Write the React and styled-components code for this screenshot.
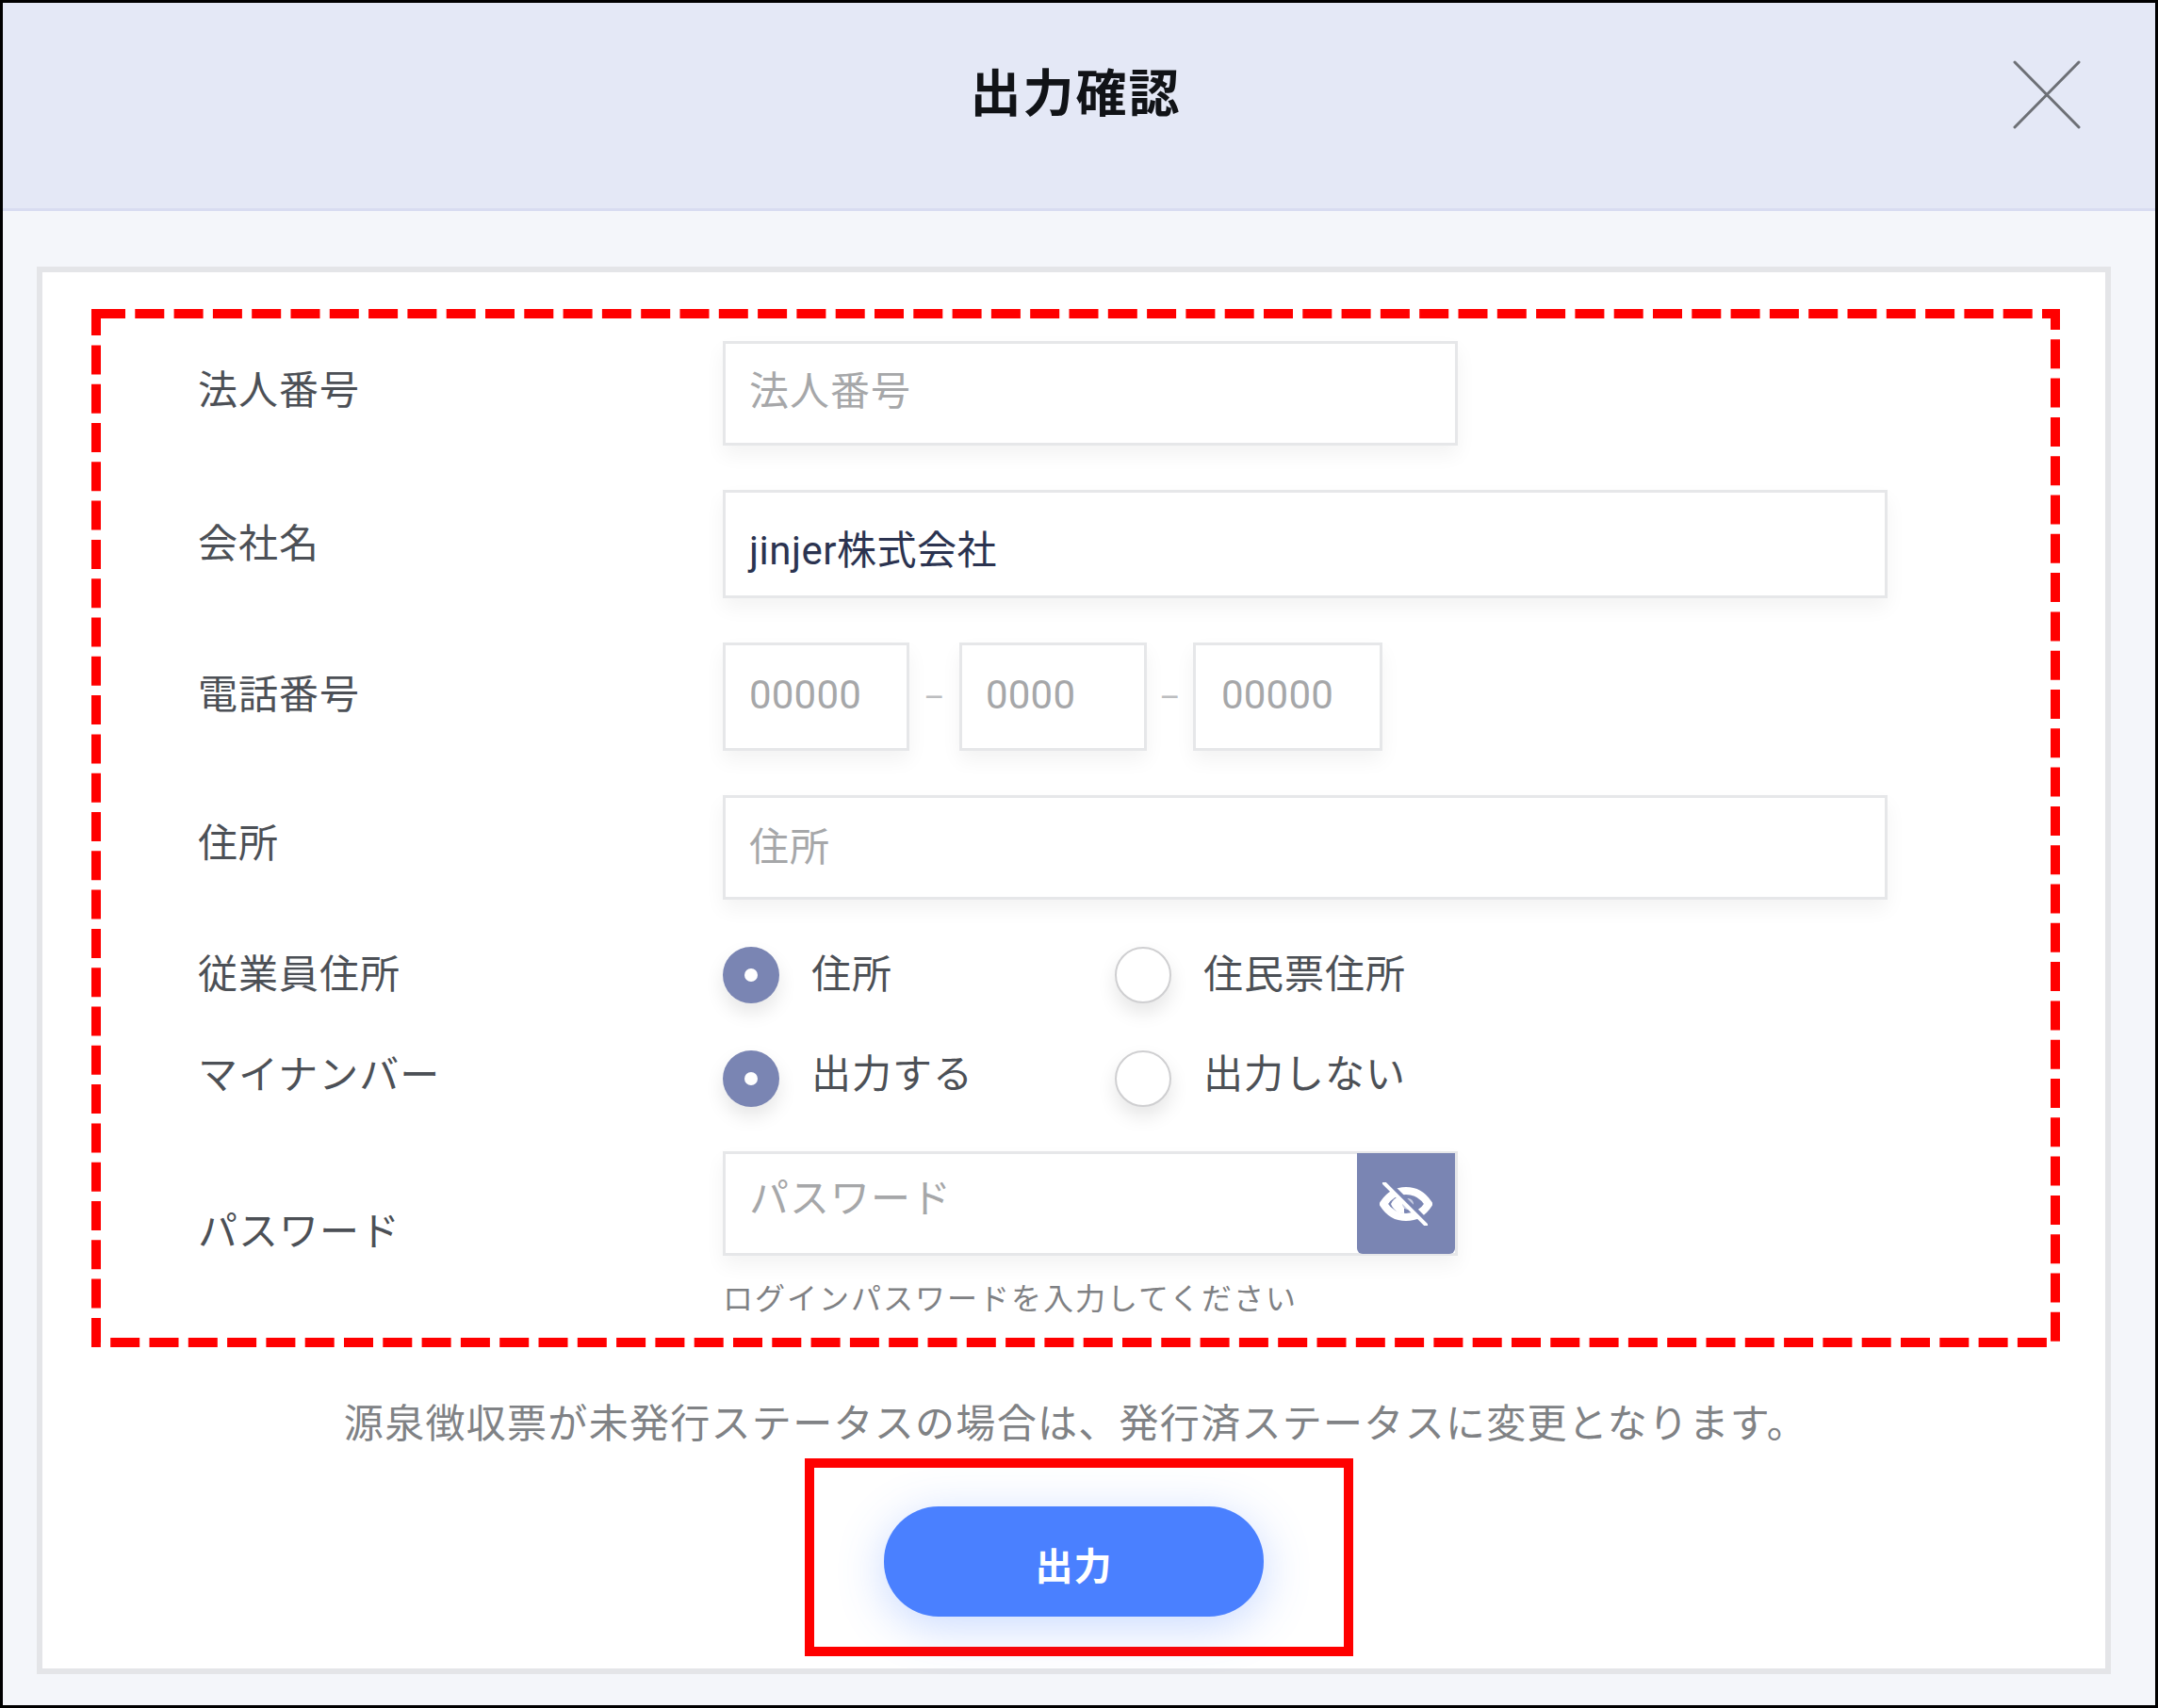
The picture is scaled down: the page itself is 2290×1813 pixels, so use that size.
import React from "react";
import styled, { createGlobalStyle } from "styled-components";

const Global = createGlobalStyle`
  html, body { margin: 0; padding: 0; background: #fff; }
  * { box-sizing: border-box; }
`;

const Frame = styled.div`
  width: 2290px;
  height: 1813px;
  border: 3px solid #000;
  display: flex;
  flex-direction: column;
  background: #f4f6fa;
  font-family: Roboto, "Noto Sans CJK JP", sans-serif;
  color: #4c5056;
`;

const Header = styled.header`
  height: 221px;
  flex: none;
  display: grid;
  grid-template-columns: 1fr auto 1fr;
  align-items: center;
  padding: 0 79px 24px 72px;
  background: #e4e8f6;
  border-bottom: 3px solid #d8dcf1;
`;

const Title = styled.h1`
  grid-column: 2;
  margin: 2px 0 0;
  font-size: 54px;
  line-height: 70px;
  font-weight: 700;
  letter-spacing: 2px;
  color: #111317;
`;

const Close = styled.button`
  grid-column: 3;
  justify-self: end;
  width: 72px;
  height: 73px;
  padding: 0;
  margin: 0;
  border: 0;
  background: none;
  display: block;
  svg { display: block; }
`;

const Body = styled.main`
  flex: 1;
  min-height: 0;
  padding: 59px 47px 33px 36px;
`;

const Card = styled.section`
  height: 100%;
  border: 6px solid #e4e5e8;
  background: #fff;
  padding: 39px 48px 0 52px;
  display: flex;
  flex-direction: column;
`;

const Annotated = styled.div`
  position: relative;
  height: 1102px;
  padding: 34px 0 0 113px;
  flex: none;
`;

const DashedMark = styled.svg`
  position: absolute;
  left: 0;
  top: 0;
  pointer-events: none;
`;

const Row = styled.div`
  display: grid;
  grid-template-columns: 557px 1fr;
  align-items: center;
  margin-top: ${(p) => p.$top || 0}px;
`;

const Label = styled.div`
  font-size: 42px;
  line-height: 60px;
  letter-spacing: 1px;
  position: relative;
  top: ${(p) => p.$shift || 0}px;
`;

const Field = styled.div`
  width: ${(p) => p.$w}px;
  height: ${(p) => p.$h}px;
  flex: none;
  display: flex;
  align-items: center;
  padding: ${(p) => p.$drop || 0}px 0 ${(p) => p.$lift ?? 0}px ${(p) => p.$pad ?? 25}px;
  background: #fff;
  border: 3px solid #e6e7e9;
  box-shadow: 0 10px 20px rgba(0, 0, 0, 0.05);
  font-size: 42px;
  letter-spacing: ${(p) => p.$ls ?? 1}px;
  color: ${(p) => (p.$filled ? "#2b3350" : "#a6a7a9")};
`;

const Group = styled.div`
  display: flex;
  align-items: center;
`;

const Sep = styled.span`
  width: ${(p) => p.$w}px;
  text-align: center;
  font-size: 34px;
  color: #bcbdbf;
`;

const RadioRow = styled.div`
  display: flex;
  height: 62px;
  align-items: center;
`;

const RadioItem = styled.label`
  width: 416px;
  display: flex;
  align-items: center;
  gap: 34px;
  font-size: 42px;
  letter-spacing: 1px;
`;

const RadioText = styled.span`
  position: relative;
  top: ${(p) => p.$shift || 0}px;
`;

const Dot = styled.span`
  width: 60px;
  height: 60px;
  flex: none;
  border-radius: 50%;
  display: flex;
  align-items: center;
  justify-content: center;
  background: ${(p) => (p.$on ? "#7a85b3" : "#fff")};
  border: ${(p) => (p.$on ? "0" : "2.5px solid #cfcfd1")};
  box-shadow: 0 10px 20px rgba(0, 0, 0, 0.1);
  &::after {
    content: "";
    display: ${(p) => (p.$on ? "block" : "none")};
    width: 14px;
    height: 14px;
    border-radius: 50%;
    background: #fff;
  }
`;

const PasswordBox = styled(Field)`
  position: relative;
`;

const Toggle = styled.button`
  position: absolute;
  right: 0;
  top: -1px;
  width: 104px;
  height: 107px;
  padding: 0;
  border: 0;
  border-radius: 0 0 6px 6px;
  background: #7a85b3;
  display: flex;
  align-items: center;
  justify-content: center;
  svg { filter: blur(0.7px); }
`;

const Hint = styled.div`
  margin-top: 34px;
  height: 25px;
  line-height: 25px;
  font-size: 32px;
  letter-spacing: 2px;
  color: #7f8184;
  white-space: nowrap;
`;

const Notice = styled.p`
  margin: 52px 0 0;
  height: 60px;
  line-height: 60px;
  text-align: center;
  font-size: 42px;
  letter-spacing: 1.3px;
  color: #808285;
  white-space: nowrap;
`;

const ActionMark = styled.div`
  align-self: center;
  margin: 6px 0 0 7px;
  width: 582px;
  height: 210px;
  border: 10px solid #ff0000;
  padding: 41px 85px 32px 74px;
`;

const Submit = styled.button`
  width: 100%;
  height: 117px;
  border: 0;
  border-radius: 58px;
  background: #4a80ff;
  color: #fff;
  font-family: inherit;
  font-size: 40px;
  font-weight: 700;
  letter-spacing: 1px;
  padding: 5px 0 0;
  box-shadow: 0 10px 50px rgba(74, 128, 255, 0.3);
`;

const CloseIcon = () => (
  <svg width="72" height="73" viewBox="0 0 72 73" fill="none">
    <path d="M2 2 L70 71 M70 2 L2 71" stroke="#6d7076" strokeWidth="3" strokeLinecap="round" />
  </svg>
);

const EyeOff = () => (
  <svg width="56" height="46" viewBox="0 0 56 46" fill="none">
    <path d="M4 23 C11 12 19 9 28 9 C37 9 45 12 52 23 C45 34 37 37 28 37 C19 37 11 34 4 23Z" stroke="#fff" strokeWidth="8" />
    <path d="M12 23 C16 15 22 14 26 14 L26 33 C20 33 15 30 12 23Z" fill="#fff" />
    <circle cx="30" cy="23" r="6" fill="#c9cee3" />
    <path d="M8 0 L51 43" stroke="#7a85b3" strokeWidth="6" />
    <path d="M5 1 L49 45" stroke="#fff" strokeWidth="4" strokeLinecap="round" />
  </svg>
);

const Radio = ({ on, text, shift }) => (
  <RadioItem>
    <Dot $on={on} />
    <RadioText $shift={shift}>{text}</RadioText>
  </RadioItem>
);

export default function App() {
  return (
    <>
      <Global />
      <Frame>
        <Header>
          <Title>出力確認</Title>
          <Close aria-label="閉じる">
            <CloseIcon />
          </Close>
        </Header>
        <Body>
          <Card>
            <Annotated>
              <DashedMark width="2089" height="1102" viewBox="0 0 2089 1102" fill="none">
                <rect x="5" y="5" width="2079" height="1092" stroke="#ff0000" strokeWidth="10" strokeDasharray="31 10.3" />
              </DashedMark>
              <Row>
                <Label $shift={-3}>法人番号</Label>
                <Field $w={780} $h={111} $lift={12}>法人番号</Field>
              </Row>
              <Row $top={47}>
                <Label>会社名</Label>
                <Field $w={1236} $h={115} $filled $drop={6} $ls={0.5}>jinjer株式会社</Field>
              </Row>
              <Row $top={47}>
                <Label $shift={-2}>電話番号</Label>
                <Group>
                  <Field $w={198} $h={115} $lift={4} $ls={0.2}>00000</Field>
                  <Sep $w={53}>–</Sep>
                  <Field $w={199} $h={115} $lift={4} $ls={0.2}>0000</Field>
                  <Sep $w={49}>–</Sep>
                  <Field $w={201} $h={115} $lift={4} $ls={0.2} $pad={27}>00000</Field>
                </Group>
              </Row>
              <Row $top={47}>
                <Label $shift={-4}>住所</Label>
                <Field $w={1236} $h={111} $lift={8}>住所</Field>
              </Row>
              <Row $top={49}>
                <Label>従業員住所</Label>
                <RadioRow>
                  <Radio on text="住所" shift={-5} />
                  <Radio text="住民票住所" shift={-5} />
                </RadioRow>
              </Row>
              <Row $top={48}>
                <Label $shift={-3}>マイナンバー</Label>
                <RadioRow>
                  <Radio on text="出力する" shift={-9} />
                  <Radio text="出力しない" shift={-9} />
                </RadioRow>
              </Row>
              <Row $top={46}>
                <Label $shift={1}>パスワード</Label>
                <div>
                  <PasswordBox $w={780} $h={111} $lift={19}>
                    パスワード
                    <Toggle aria-label="パスワードを表示">
                      <EyeOff />
                    </Toggle>
                  </PasswordBox>
                  <Hint>ログインパスワードを入力してください</Hint>
                </div>
              </Row>
            </Annotated>
            <Notice>源泉徴収票が未発行ステータスの場合は、発行済ステータスに変更となります。</Notice>
            <ActionMark>
              <Submit>出力</Submit>
            </ActionMark>
          </Card>
        </Body>
      </Frame>
    </>
  );
}
